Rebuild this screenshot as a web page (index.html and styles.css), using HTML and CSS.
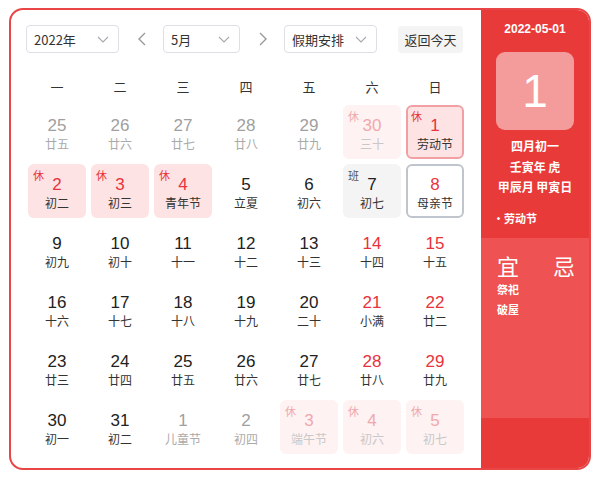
FILE: index.html
```html
<!DOCTYPE html>
<html lang="zh">
<head>
<meta charset="utf-8">
<link rel="stylesheet" href="styles.css">
</head>
<body>
<div class="cal">
  <div class="main">
    <div class="toolbar">
      <div class="select w93"><span>2022年</span><svg class="chev" viewBox="0 0 12 7" width="12" height="7"><path d="M1 1 L6 6 L11 1" fill="none" stroke="#a8abb2" stroke-width="1.2"/></svg></div>
      <svg class="arrow" viewBox="0 0 8 14" width="8" height="14"><path d="M7 1 L1 7 L7 13" fill="none" stroke="#999" stroke-width="1.4"/></svg>
      <div class="select w77"><span>5月</span><svg class="chev" viewBox="0 0 12 7" width="12" height="7"><path d="M1 1 L6 6 L11 1" fill="none" stroke="#a8abb2" stroke-width="1.2"/></svg></div>
      <svg class="arrow" viewBox="0 0 8 14" width="8" height="14"><path d="M1 1 L7 7 L1 13" fill="none" stroke="#999" stroke-width="1.4"/></svg>
      <div class="select w93"><span>假期安排</span><svg class="chev" viewBox="0 0 12 7" width="12" height="7"><path d="M1 1 L6 6 L11 1" fill="none" stroke="#a8abb2" stroke-width="1.2"/></svg></div>
      <div class="today-btn">返回今天</div>
    </div>
    <div class="week">
      <span>一</span><span>二</span><span>三</span><span>四</span><span>五</span><span>六</span><span>日</span>
    </div>
    <div class="grid">
      <div class="cell other"><b>25</b><i>廿五</i></div>
      <div class="cell other"><b>26</b><i>廿六</i></div>
      <div class="cell other"><b>27</b><i>廿七</i></div>
      <div class="cell other"><b>28</b><i>廿八</i></div>
      <div class="cell other"><b>29</b><i>廿九</i></div>
      <div class="cell other rest"><em>休</em><b>30</b><i>三十</i></div>
      <div class="cell rest selected"><em>休</em><b>1</b><i>劳动节</i></div>

      <div class="cell rest"><em>休</em><b>2</b><i>初二</i></div>
      <div class="cell rest"><em>休</em><b>3</b><i>初三</i></div>
      <div class="cell rest"><em>休</em><b>4</b><i>青年节</i></div>
      <div class="cell"><b>5</b><i>立夏</i></div>
      <div class="cell"><b>6</b><i>初六</i></div>
      <div class="cell work"><em>班</em><b>7</b><i>初七</i></div>
      <div class="cell wkd today"><b>8</b><i>母亲节</i></div>

      <div class="cell"><b>9</b><i>初九</i></div>
      <div class="cell"><b>10</b><i>初十</i></div>
      <div class="cell"><b>11</b><i>十一</i></div>
      <div class="cell"><b>12</b><i>十二</i></div>
      <div class="cell"><b>13</b><i>十三</i></div>
      <div class="cell wkd"><b>14</b><i>十四</i></div>
      <div class="cell wkd"><b>15</b><i>十五</i></div>

      <div class="cell"><b>16</b><i>十六</i></div>
      <div class="cell"><b>17</b><i>十七</i></div>
      <div class="cell"><b>18</b><i>十八</i></div>
      <div class="cell"><b>19</b><i>十九</i></div>
      <div class="cell"><b>20</b><i>二十</i></div>
      <div class="cell wkd"><b>21</b><i>小满</i></div>
      <div class="cell wkd"><b>22</b><i>廿二</i></div>

      <div class="cell"><b>23</b><i>廿三</i></div>
      <div class="cell"><b>24</b><i>廿四</i></div>
      <div class="cell"><b>25</b><i>廿五</i></div>
      <div class="cell"><b>26</b><i>廿六</i></div>
      <div class="cell"><b>27</b><i>廿七</i></div>
      <div class="cell wkd"><b>28</b><i>廿八</i></div>
      <div class="cell wkd"><b>29</b><i>廿九</i></div>

      <div class="cell"><b>30</b><i>初一</i></div>
      <div class="cell"><b>31</b><i>初二</i></div>
      <div class="cell other"><b>1</b><i>儿童节</i></div>
      <div class="cell other"><b>2</b><i>初四</i></div>
      <div class="cell other rest"><em>休</em><b>3</b><i>端午节</i></div>
      <div class="cell other rest"><em>休</em><b>4</b><i>初六</i></div>
      <div class="cell other rest"><em>休</em><b>5</b><i>初七</i></div>
    </div>
  </div>
  <div class="side">
    <div class="side-top">
      <div class="side-date">2022-05-01</div>
      <div class="big-day">1</div>
      <div class="lunar">
        <div>四月初一</div>
        <div>壬寅年 虎</div>
        <div>甲辰月 甲寅日</div>
      </div>
      <div class="fest">•劳动节</div>
    </div>
    <div class="side-mid">
      <div class="yj"><span>宜</span><span>忌</span></div>
      <div class="yi-list">
        <div>祭祀</div>
        <div>破屋</div>
      </div>
    </div>
    <div class="side-bot"></div>
  </div>
</div>
</body>
</html>
```

FILE: styles.css
```css
* { box-sizing: border-box; }
html, body { margin: 0; padding: 0; background: #fff; }
body {
  font-family: "Liberation Sans", "Noto Sans CJK SC", sans-serif;
  color: #303133;
}
.cal {
  margin: 8px 0 0 9px;
  width: 582px;
  height: 462px;
  border: 2px solid #e84646;
  border-radius: 14px;
  overflow: hidden;
  display: flex;
  background: #fff;
}
.main {
  width: 470px;
  padding: 15px 0 0 15px;
}
.toolbar {
  display: flex;
  align-items: center;
  height: 28px;
}
.select {
  height: 28px;
  border: 1px solid #dcdfe6;
  border-radius: 4px;
  display: flex;
  align-items: center;
  justify-content: space-between;
  padding: 0 9px 0 7px;
  font-size: 13px;
  color: #333;
  font-family: "Noto Sans CJK SC", sans-serif;
}
.select span { line-height: 1; }
.w93 { width: 93px; }
.w77 { width: 77px; }
.arrow { margin: 0 17px 0 19px; flex: none; }
.today-btn {
  margin-left: 21px;
  width: 65px;
  height: 27px;
  background: #f4f4f5;
  border-radius: 4px;
  font-size: 13px;
  color: #333;
  display: flex;
  align-items: center;
  justify-content: center;
  font-family: "Noto Sans CJK SC", sans-serif;
}
.week {
  margin: 19px 0 0 2px;
  height: 30px;
  display: grid;
  grid-template-columns: repeat(7, 58px);
  column-gap: 5px;
  align-items: center;
  font-size: 13px;
  color: #333;
  font-family: "Noto Sans CJK SC", sans-serif;
}
.week span { text-align: center; line-height: 30px; }
.grid {
  margin: 3px 0 0 2px;
  display: grid;
  grid-template-columns: repeat(7, 58px);
  grid-auto-rows: 54px;
  gap: 5px;
}
.cell {
  position: relative;
  border-radius: 6px;
  display: flex;
  flex-direction: column;
  align-items: center;
  padding-top: 11px;
  border: 2px solid transparent;
}
.cell b {
  font-weight: normal;
  font-size: 17px;
  line-height: 20px;
  color: #222;
  margin-top: -2px;
}
.cell i {
  font-style: normal;
  font-size: 12px;
  line-height: 16px;
  color: #333;
  font-family: "Noto Sans CJK SC", sans-serif;
}
.cell em {
  position: absolute;
  left: 3px;
  top: 1px;
  font-style: normal;
  font-size: 11px;
  line-height: 16px;
  color: #e8323c;
  font-family: "Noto Sans CJK SC", sans-serif;
}
.cell.other b { color: #a0a0a0; }
.cell.other i { color: #aaa; }
.cell.rest { background: #fde3e3; }
.cell.rest b { color: #e8323c; }
.cell.other.rest { background: #fef2f2; }
.cell.other.rest b { color: #f0a8ad; }
.cell.other.rest em { color: #f0a8ad; }
.cell.other.rest i { color: #c8c8c8; }
.cell.selected { border-color: #f0a0a3; }
.cell.work { background: #f4f4f5; }
.cell.work em { color: #555; }
.cell.wkd b { color: #e8323c; }
.cell.today { border-color: #c0c4cc; }

.side {
  width: 108px;
  display: flex;
  flex-direction: column;
  color: #fff;
  font-family: "Noto Sans CJK SC", sans-serif;
  font-weight: bold;
}
.side-top {
  height: 228px;
  background: #e93a3a;
  padding-top: 9px;
  display: flex;
  flex-direction: column;
  align-items: center;
}
.side-date {
  font-family: "Liberation Sans", sans-serif;
  font-size: 12px;
  line-height: 20px;
}
.big-day {
  margin-top: 13px;
  width: 78px;
  height: 78px;
  border-radius: 9px;
  background: #f49b9b;
  display: flex;
  align-items: center;
  justify-content: center;
  font-family: "Liberation Sans", sans-serif;
  font-weight: normal;
  font-size: 46px;
}
.lunar {
  margin-top: 6px;
  text-align: center;
  font-size: 12px;
  line-height: 20.5px;
}
.fest {
  align-self: flex-start;
  margin: 10px 0 0 12px;
  font-size: 11px;
  line-height: 20px;
}
.side-mid {
  height: 180px;
  background: #ee5252;
  padding: 13px 14px 0 16px;
}
.yj {
  display: flex;
  justify-content: space-between;
  font-size: 22px;
  line-height: 28px;
  font-weight: normal;
}
.yi-list {
  font-size: 11px;
  line-height: 20px;
}
.side-bot {
  flex: 1;
  background: #e93a3a;
}
```
